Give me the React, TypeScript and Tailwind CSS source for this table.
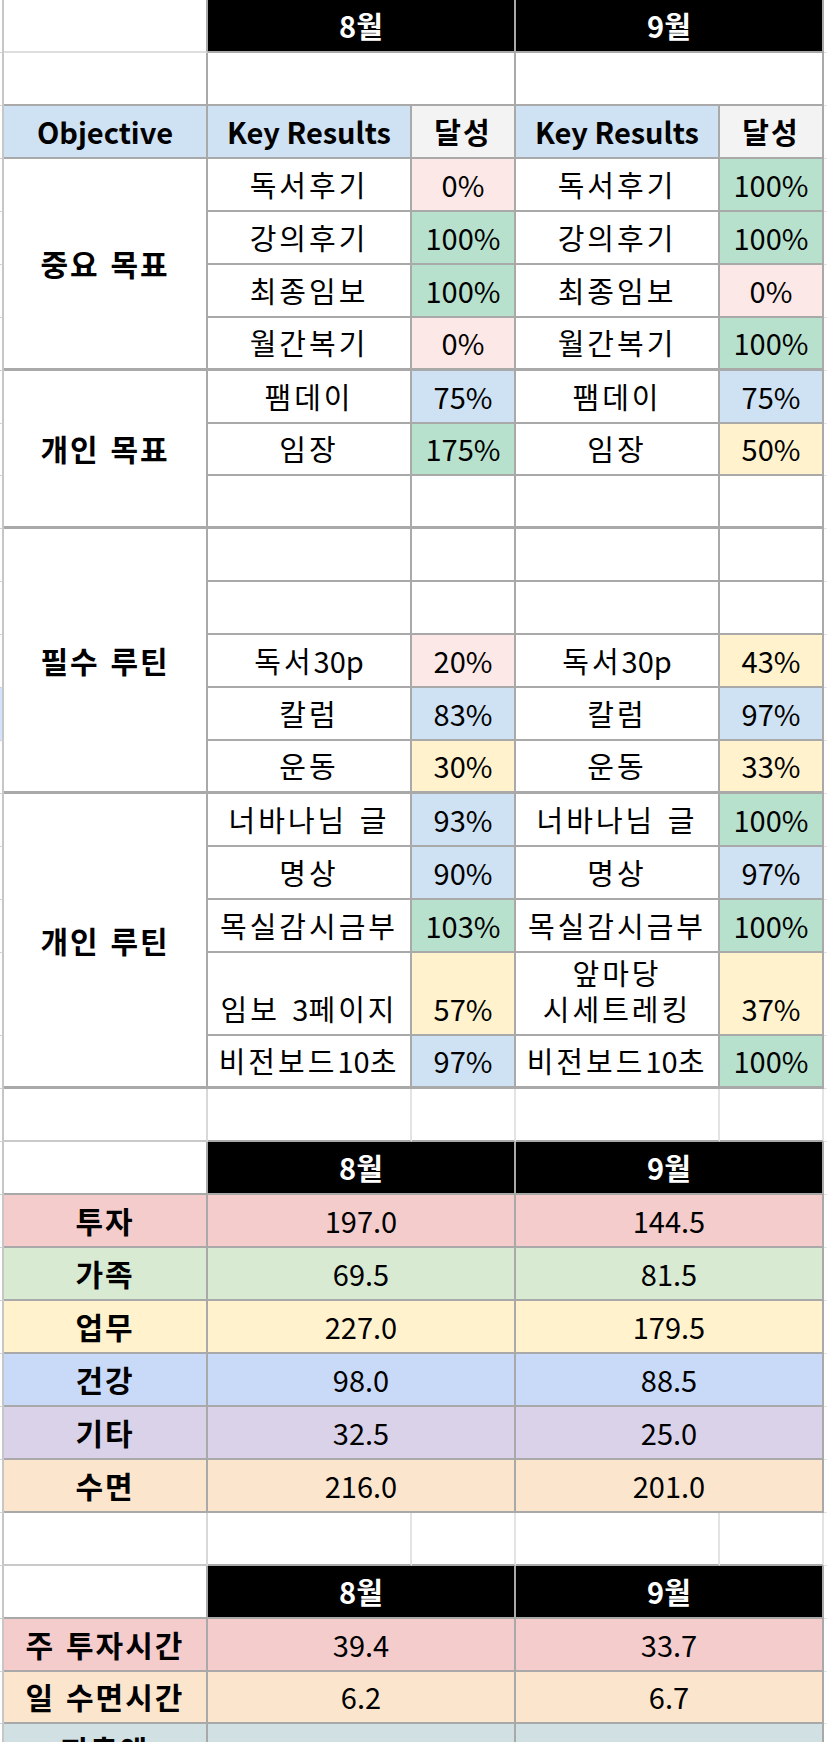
import clsx from 'clsx';

type Kr = { k: string; v: string; c: string };
type Row = { a: Kr | null; b: Kr | null; tall?: boolean };
type Group = { label: string; span: string; rows: Row[] };

const pink = 'bg-[#fce8e6]';
const green = 'bg-[#b7e1cd]';
const blue = 'bg-[#cfe2f3]';
const yellow = 'bg-[#fff2cc]';

const groups: Group[] = [
  {
    label: '중요 목표',
    span: 'row-span-4',
    rows: [
      { a: { k: '독서후기', v: '0%', c: pink }, b: { k: '독서후기', v: '100%', c: green } },
      { a: { k: '강의후기', v: '100%', c: green }, b: { k: '강의후기', v: '100%', c: green } },
      { a: { k: '최종임보', v: '100%', c: green }, b: { k: '최종임보', v: '0%', c: pink } },
      { a: { k: '월간복기', v: '0%', c: pink }, b: { k: '월간복기', v: '100%', c: green } },
    ],
  },
  {
    label: '개인 목표',
    span: 'row-span-3',
    rows: [
      { a: { k: '팸데이', v: '75%', c: blue }, b: { k: '팸데이', v: '75%', c: blue } },
      { a: { k: '임장', v: '175%', c: green }, b: { k: '임장', v: '50%', c: yellow } },
      { a: null, b: null },
    ],
  },
  {
    label: '필수 루틴',
    span: 'row-span-5',
    rows: [
      { a: null, b: null },
      { a: null, b: null },
      { a: { k: '독서30p', v: '20%', c: pink }, b: { k: '독서30p', v: '43%', c: yellow } },
      { a: { k: '칼럼', v: '83%', c: blue }, b: { k: '칼럼', v: '97%', c: blue } },
      { a: { k: '운동', v: '30%', c: yellow }, b: { k: '운동', v: '33%', c: yellow } },
    ],
  },
  {
    label: '개인 루틴',
    span: 'row-span-5',
    rows: [
      { a: { k: '너바나님 글', v: '93%', c: blue }, b: { k: '너바나님 글', v: '100%', c: green } },
      { a: { k: '명상', v: '90%', c: blue }, b: { k: '명상', v: '97%', c: blue } },
      { a: { k: '목실감시금부', v: '103%', c: green }, b: { k: '목실감시금부', v: '100%', c: green } },
      {
        a: { k: '임보 3페이지', v: '57%', c: yellow },
        b: { k: '앞마당\n시세트레킹', v: '37%', c: yellow },
        tall: true,
      },
      { a: { k: '비전보드10초', v: '97%', c: blue }, b: { k: '비전보드10초', v: '100%', c: green } },
    ],
  },
];

const hours = [
  { label: '투자', a: '197.0', b: '144.5', c: 'bg-[#f4cccc]' },
  { label: '가족', a: '69.5', b: '81.5', c: 'bg-[#d9ead3]' },
  { label: '업무', a: '227.0', b: '179.5', c: 'bg-[#fff2cc]' },
  { label: '건강', a: '98.0', b: '88.5', c: 'bg-[#c9daf8]' },
  { label: '기타', a: '32.5', b: '25.0', c: 'bg-[#d9d2e9]' },
  { label: '수면', a: '216.0', b: '201.0', c: 'bg-[#fce5cd]' },
];

const summary = [
  { label: '주 투자시간', a: '39.4', b: '33.7', c: 'bg-[#f4cccc]' },
  { label: '일 수면시간', a: '6.2', b: '6.7', c: 'bg-[#fce5cd]' },
  { label: '지출액', a: '', b: '', c: 'bg-[#d0e0e3]' },
];

const line = 'border-[#a9a9a9]';
const text =
  'flex items-end justify-center whitespace-pre-line text-center pb-[8px] text-[29px] leading-[36px]';
// hangul in the sheet runs wider than in Noto, so open it up a bit
const hangul = 'tracking-[3px] [word-spacing:3px]';
const label = 'font-bold text-[30px] tracking-[2px] [word-spacing:2px]';

// keep digits / latin tight, only the hangul gets the extra tracking
const KeyText = ({ value }: { value?: string }) => {
  if (!value) return null;
  const parts = value.split(/([0-9a-z]+)/);
  return (
    <span>
      {parts.map((p, i) =>
        /^[0-9a-z]+$/.test(p) ? (
          <span key={i} className="tracking-normal">
            {p}
          </span>
        ) : (
          <span key={i}>{p}</span>
        )
      )}
    </span>
  );
};

const Strip = ({ on }: { on?: boolean }) => (
  <div
    className={clsx(
      'border-r-2 border-r-[#c6c6c6] border-b border-b-[#d2d2d2]',
      on ? 'bg-[#d3e3fd]' : 'bg-white'
    )}
  />
);

const Edge = () => <div className="bg-white border-b border-b-[#e3e3e3]" />;

const MonthHeader = () => (
  <>
    <div className={clsx(text, 'col-span-2 bg-black text-white font-bold border-r-2 border-b-2', line)}>8월</div>
    <div className={clsx(text, 'col-span-2 bg-black text-white font-bold border-r-2 border-b-2', line)}>9월</div>
  </>
);

const ValueRow = ({ label: name, a, b, c }: { label: string; a: string; b: string; c: string }) => (
  <>
    <Strip />
    <div className={clsx(text, label, c, 'border-r-2 border-b-2', line)}>{name}</div>
    <div className={clsx(text, c, 'col-span-2 border-r-2 border-b-2', line)}>{a}</div>
    <div className={clsx(text, c, 'col-span-2 border-r-2 border-b-2', line)}>{b}</div>
    <Edge />
  </>
);

const EmptyRow = () => (
  <>
    <Strip />
    <div className="bg-white border-r-2 border-r-[#d8d8d8] border-b-2 border-b-[#c9c9c9]" />
    <div className="bg-white border-r-2 border-r-[#e3e3e3] border-b-2 border-b-[#a9a9a9]" />
    <div className="bg-white border-r-2 border-r-[#e3e3e3] border-b-2 border-b-[#a9a9a9]" />
    <div className="bg-white border-r-2 border-r-[#e3e3e3] border-b-2 border-b-[#a9a9a9]" />
    <div className="bg-white border-r-2 border-r-[#e3e3e3] border-b-2 border-b-[#a9a9a9]" />
    <Edge />
  </>
);

export default function App() {
  let rowNo = 3;

  return (
    <div className="h-[1742px] w-[827px] overflow-hidden bg-white text-black font-['Noto_Sans_CJK_KR','Noto_Sans',sans-serif]">
      <div className="grid grid-cols-[4px_204px_204px_104px_204px_104px_3px] grid-rows-[repeat(18,52.95px)_83.4px_repeat(14,52.95px)]">
        {/* month header */}
        <Strip />
        <div className="bg-white border-r-2 border-r-[#a9a9a9] border-b-2 border-b-[#dedede]" />
        <MonthHeader />
        <Edge />

        <Strip />
        <div className={clsx('bg-white border-r-2 border-b-2', line)} />
        <div className={clsx('col-span-2 bg-white border-r-2 border-b-2', line)} />
        <div className={clsx('col-span-2 bg-white border-r-2 border-b-2', line)} />
        <Edge />

        {/* column titles */}
        <Strip />
        <div className={clsx(text, 'bg-[#cfe2f3] font-bold border-r-2 border-b-2', line)}>Objective</div>
        <div className={clsx(text, 'bg-[#cfe2f3] font-bold border-r-2 border-b-2', line)}>Key Results</div>
        <div className={clsx(text, 'bg-[#f3f3f3] font-bold tracking-[2px] border-r-2 border-b-2', line)}>달성</div>
        <div className={clsx(text, 'bg-[#cfe2f3] font-bold border-r-2 border-b-2', line)}>Key Results</div>
        <div className={clsx(text, 'bg-[#f3f3f3] font-bold tracking-[2px] border-r-2 border-b-2', line)}>달성</div>
        <Edge />

        {groups.map((g) =>
          g.rows.map((r, i) => {
            rowNo += 1;
            const last = i === g.rows.length - 1;
            const bottom = last ? 'border-b-[3px]' : 'border-b-2';
            return (
              <div key={`${g.label}-${i}`} className="contents">
                <Strip on={rowNo === 14} />
                {i === 0 ? (
                  <div
                    className={clsx(
                      g.span,
                      label,
                      'flex items-center justify-center bg-white leading-[36px] border-r-2 border-b-[3px]',
                      line
                    )}
                  >
                    {g.label}
                  </div>
                ) : null}
                <div className={clsx(text, hangul, 'bg-white border-r-2', bottom, line)}>
                  <KeyText value={r.a?.k} />
                </div>
                <div className={clsx(text, r.a ? r.a.c : 'bg-white', 'border-r-2', bottom, line)}>{r.a?.v}</div>
                <div className={clsx(text, hangul, 'bg-white border-r-2', bottom, line)}>
                  <KeyText value={r.b?.k} />
                </div>
                <div className={clsx(text, r.b ? r.b.c : 'bg-white', 'border-r-2', bottom, line)}>{r.b?.v}</div>
                <Edge />
              </div>
            );
          })
        )}

        <EmptyRow />

        {/* time by category */}
        <Strip />
        <div className={clsx('bg-white border-r-2 border-b-2', line)} />
        <MonthHeader />
        <Edge />
        {hours.map((h) => (
          <ValueRow key={h.label} {...h} />
        ))}

        <EmptyRow />

        <Strip />
        <div className={clsx('bg-white border-r-2 border-b-2', line)} />
        <MonthHeader />
        <Edge />
        {summary.map((h) => (
          <ValueRow key={h.label} {...h} />
        ))}
      </div>
    </div>
  );
}
